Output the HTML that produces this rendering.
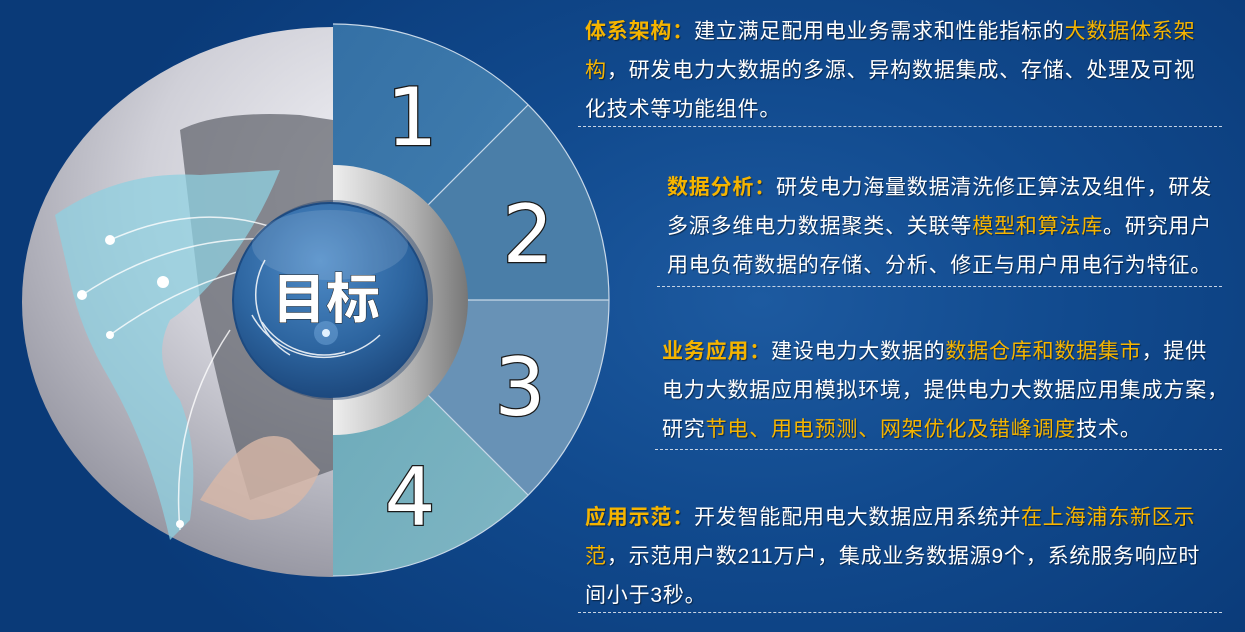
<!DOCTYPE html>
<html><head><meta charset="utf-8"><style>
html,body{margin:0;padding:0;}
body{width:1245px;height:632px;overflow:hidden;position:relative;
background:radial-gradient(ellipse 700px 500px at 760px 300px,#1d5aa0 0%,#114a8e 45%,#0a3a78 100%);
font-family:"Liberation Sans","Noto Sans CJK SC",sans-serif;}
.t{position:absolute;color:#fff;font-size:21px;line-height:39px;white-space:nowrap;letter-spacing:0.8px;text-shadow:1px 1px 1px rgba(0,0,0,.5);}
.t b{color:#f5b400;}
.y{color:#f5b400;}
.d{position:absolute;height:0;border-top:1.5px dashed #c8d4e4;}
</style></head><body>
<svg width="1245" height="632" style="position:absolute;left:0;top:0">
<defs>
<radialGradient id="ph" cx="0.6" cy="0.3" r="0.8">
<stop offset="0" stop-color="#f4f4f8"/><stop offset="0.5" stop-color="#d0d0d8"/><stop offset="1" stop-color="#8a8a96"/></radialGradient>
<linearGradient id="ring" x1="0" y1="0" x2="1" y2="0"><stop offset="0" stop-color="#eee"/><stop offset="0.6" stop-color="#b0b0b0"/><stop offset="1" stop-color="#777"/></linearGradient>
<radialGradient id="btn" cx="0.45" cy="0.3" r="0.75"><stop offset="0" stop-color="#4f8cc8"/><stop offset="0.6" stop-color="#2d65a0"/><stop offset="1" stop-color="#1a4478"/></radialGradient>
<linearGradient id="s1" x1="0" y1="0" x2="1" y2="1"><stop offset="0" stop-color="#3470a5"/><stop offset="1" stop-color="#4480b0"/></linearGradient>
<linearGradient id="s4" x1="0" y1="0" x2="1" y2="1"><stop offset="0" stop-color="#6aa9b8"/><stop offset="1" stop-color="#80b6c4"/></linearGradient>
<clipPath id="lh"><rect x="0" y="0" width="333" height="632"/></clipPath>
</defs>
<g clip-path="url(#lh)">
<ellipse cx="333" cy="302" rx="311" ry="275" fill="url(#ph)"/>
<path d="M180 130 Q220 110 300 115 L333 120 L333 470 L250 500 Q220 400 200 300 Z" fill="#5d5f68" opacity="0.7"/>
<path d="M55 215 Q120 170 200 175 L280 170 Q260 220 230 260 Q200 300 170 320 Q150 360 180 400 Q200 450 190 520 L170 540 Q150 450 110 380 Q80 330 70 280 Z" fill="#8fd0e0" opacity="0.75"/>
<path d="M200 500 Q250 420 290 440 L320 470 Q300 520 250 520 Z" fill="#d8b8a8" opacity="0.8"/>
<g stroke="#fff" fill="none" stroke-width="1.5" opacity="0.8">
<path d="M110 240 Q200 200 280 230"/><path d="M82 295 Q180 230 290 240"/><path d="M110 335 Q200 270 300 260"/><path d="M180 530 Q170 420 230 330"/>
</g>
<g fill="#fff"><circle cx="110" cy="240" r="5"/><circle cx="163" cy="282" r="6"/><circle cx="82" cy="295" r="5"/><circle cx="110" cy="335" r="4"/><circle cx="180" cy="524" r="4"/></g>
</g>
<path d="M333 300 L333 24 A276 276 0 0 1 528 105 Z" fill="url(#s1)"/>
<path d="M333 300 L528 105 A276 276 0 0 1 609 300 Z" fill="#4a7ea8"/>
<path d="M333 300 L609 300 A276 276 0 0 1 528 495 Z" fill="#6892b6"/>
<path d="M333 300 L528 495 A276 276 0 0 1 333 576 Z" fill="url(#s4)"/>
<g stroke="#c8d8e8" stroke-width="1.2" fill="none">
<path d="M333 24 A276 276 0 0 1 609 300 A276 276 0 0 1 333 576"/><line x1="333" y1="300" x2="528" y2="105"/><line x1="333" y1="300" x2="609" y2="300"/><line x1="333" y1="300" x2="528" y2="495"/>
</g>
<path d="M333 165 A135 135 0 0 1 333 435 Z" fill="url(#ring)"/>
<circle cx="333" cy="300" r="100" fill="#1a3a66" opacity="0.4"/>
<circle cx="330" cy="300" r="97" fill="url(#btn)" stroke="#1d4a80" stroke-width="2"/>
<ellipse cx="330" cy="245" rx="78" ry="35" fill="#fff" opacity="0.12"/>
<g stroke="#fff" fill="none" stroke-width="1.5" opacity="0.85">
<path d="M265 260 A70 70 0 0 0 290 355"/><path d="M252 315 A82 82 0 0 0 380 335"/><path d="M262 322 A75 75 0 0 0 345 352"/>
</g>
<circle cx="326" cy="333" r="4" fill="#fff"/><circle cx="326" cy="333" r="12" fill="#9fd0ff" opacity="0.3"/>
<text x="326" y="318" text-anchor="middle" font-family="Liberation Sans,Noto Sans CJK SC,sans-serif" font-weight="bold" font-size="54" fill="#fff" stroke="#222" stroke-width="1" style="paint-order:stroke">目标</text>
<g font-family="DejaVu Sans,Liberation Sans,sans-serif" font-size="80" fill="#fff" text-anchor="middle" style="paint-order:stroke" stroke="#1a1a1a" stroke-width="2.5">
<text x="412" y="145">1</text><text x="528" y="262">2</text><text x="520" y="415">3</text><text x="410" y="525">4</text>
</g>
</svg>
<div class="t" style="left:585px;top:12px"><b>体系架构：</b>建立满足配用电业务需求和性能指标的<span class="y">大数据体系架</span><br><span class="y">构</span>，研发电力大数据的多源、异构数据集成、存储、处理及可视<br>化技术等功能组件。</div>
<div class="d" style="left:578px;width:644px;top:126px"></div>
<div class="t" style="left:667px;top:168px"><b>数据分析：</b>研发电力海量数据清洗修正算法及组件，研发<br>多源多维电力数据聚类、关联等<span class="y">模型和算法库</span>。研究用户<br>用电负荷数据的存储、分析、修正与用户用电行为特征。</div>
<div class="d" style="left:657px;width:565px;top:286px"></div>
<div class="t" style="left:662px;top:332px"><b>业务应用：</b>建设电力大数据的<span class="y">数据仓库和数据集市</span>，提供<br>电力大数据应用模拟环境，提供电力大数据应用集成方案，<br>研究<span class="y">节电、用电预测、网架优化及错峰调度</span>技术。</div>
<div class="d" style="left:655px;width:567px;top:449px"></div>
<div class="t" style="left:585px;top:498px"><b>应用示范：</b>开发智能配用电大数据应用系统并<span class="y">在上海浦东新区示</span><br><span class="y">范</span>，示范用户数211万户，集成业务数据源9个，系统服务响应时<br>间小于3秒。</div>
<div class="d" style="left:578px;width:644px;top:612px"></div>
</body></html>
